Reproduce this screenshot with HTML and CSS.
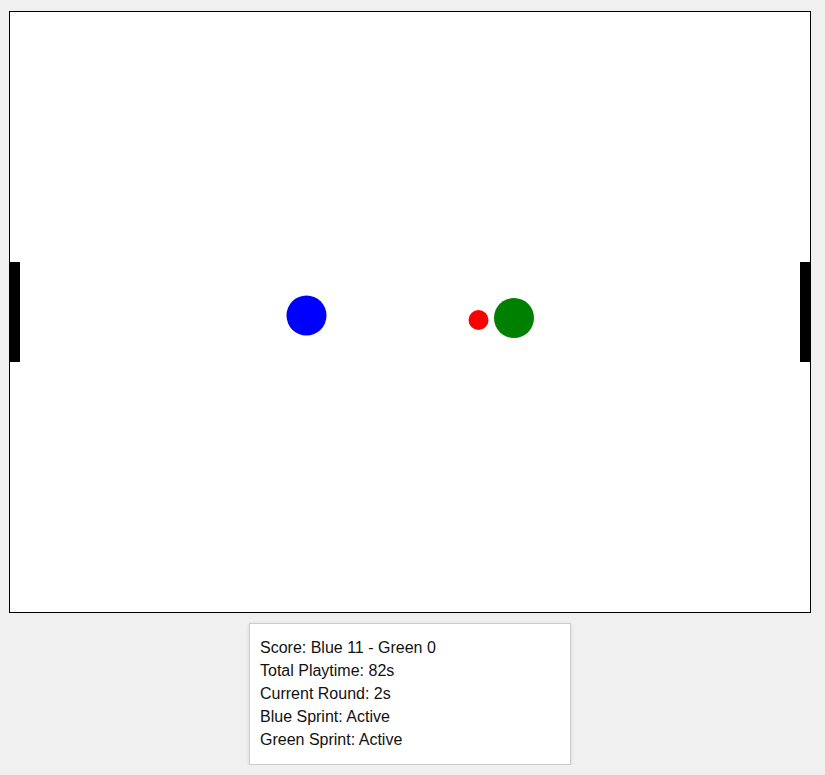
FILE: index.html
```html
<!DOCTYPE html>
<html>
<head>
<meta charset="utf-8">
<link rel="stylesheet" href="styles.css">
</head>
<body>
<div class="game">
  <svg class="field" width="800" height="600" viewBox="0 0 800 600">
    <rect x="0" y="250" width="10" height="100" fill="#000"/>
    <rect x="790" y="250" width="10" height="100" fill="#000"/>
    <circle cx="296.5" cy="303.5" r="20" fill="#0000ff"/>
    <circle cx="504" cy="306" r="20" fill="#008000"/>
    <circle cx="468.5" cy="308" r="10" fill="#ff0000"/>
  </svg>
  <div class="info">
    <div class="line">Score: Blue 11 - Green 0</div>
    <div class="line">Total Playtime: 82s</div>
    <div class="line">Current Round: 2s</div>
    <div class="line">Blue Sprint: Active</div>
    <div class="line">Green Sprint: Active</div>
  </div>
</div>
</body>
</html>
```
FILE: styles.css
```css
html, body {
  margin: 0;
  padding: 0;
  background: #f0f0f0;
}
body {
  font-family: "Liberation Sans", Arial, sans-serif;
  font-size: 16px;
  color: #111;
}
.game {
  width: 820px;
  padding-top: 11px;
  display: flex;
  flex-direction: column;
  align-items: center;
  gap: 10px;
}
.field {
  display: block;
  background: #fff;
  border: 1px solid #000;
}
.info {
  width: 300px;
  padding: 12px 10px 13px;
  background: #fff;
  border: 1px solid #ccc;
  box-shadow: 0 1px 4px rgba(0, 0, 0, 0.1);
}
.line {
  line-height: 23px;
}
```
